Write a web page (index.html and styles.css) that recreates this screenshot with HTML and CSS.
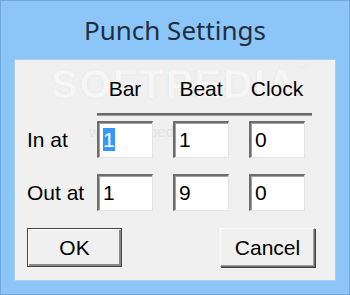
FILE: index.html
```html
<!DOCTYPE html>
<html lang="en">
<head>
  <meta charset="UTF-8" />
  <title>Punch Settings</title>
  <link rel="stylesheet" href="styles.css">
</head>
<body>

  <div class="window">
    <h1 class="caption">Punch Settings</h1>
    <div class="panel">
      <div class="watermark">SOFTPEDIA<sup>™</sup></div>
      <div class="watermark-url">www.softpedia.com</div>

      <div class="grid">
        <span></span>
        <span class="col-head">Bar</span>
        <span class="col-head">Beat</span>
        <span class="col-head">Clock</span>

        <span></span>
        <div class="rule"></div>

        <label class="row-label">In at</label>
        <div class="field"><span class="selected">1</span></div>
        <div class="field">1</div>
        <div class="field">0</div>

        <label class="row-label row-out">Out at</label>
        <div class="field row-out">1</div>
        <div class="field row-out">9</div>
        <div class="field row-out">0</div>
      </div>

      <div class="buttons">
        <button class="btn default">OK</button>
        <button class="btn">Cancel</button>
      </div>
    </div>
  </div>

</body>
</html>
```

FILE: styles.css
```css
* {
  margin: 0;
  padding: 0;
  box-sizing: border-box;
}

body {
  width: 350px;
  height: 295px;
  overflow: hidden;
  font-family: "Liberation Sans", Arial, sans-serif;
}

.window {
  width: 350px;
  height: 295px;
  background: #8cc6f8;
  border: 1px solid #6fa7d9;
  padding: 0 13px;
}

.caption {
  height: 58px;
  padding-top: 11px;
  text-align: center;
  font-family: "Noto Sans", sans-serif;
  font-weight: normal;
  font-size: 26px;
  color: #1f2e42;
}

.panel {
  position: relative;
  height: 222px;
  background: #f0f0f0;
  border: 1px solid #a9cdec;
  padding: 0 0 0 12px;
}

.watermark {
  position: absolute;
  left: 36px;
  top: 2px;
  font-size: 40px;
  font-weight: bold;
  letter-spacing: 2px;
  color: #f6f6f6;
  text-shadow: 0 0 1px #d4d4d4;
}

.watermark sup {
  font-size: 10px;
  vertical-align: top;
}

.watermark-url {
  position: absolute;
  left: 74px;
  top: 63px;
  font-size: 15px;
  color: #e2e2e2;
}

.grid {
  position: relative;
  display: grid;
  grid-template-columns: 50px 56px 56px 56px;
  grid-template-rows: 33px 20px 37px 53px;
  column-gap: 20px;
  padding-top: 8px;
  font-size: 21px;
  color: #000;
}

.col-head {
  text-align: center;
  align-self: end;
  line-height: 24px;
}

.rule {
  grid-column: 2 / 5;
  height: 3px;
  margin: 12px -7px 0 0;
  border-top: 2px solid #6a6a6a;
  border-bottom: 1px solid #9a9a9a;
  align-self: start;
}

.row-label {
  align-self: center;
  white-space: nowrap;
}

.row-out {
  margin-top: 16px;
}

.field {
  background: #fff;
  border-top: 2px solid #6d6d6d;
  border-left: 2px solid #6d6d6d;
  border-right: 1px solid #e3e3e3;
  border-bottom: 1px solid #e3e3e3;
  box-shadow: inset 1px 1px 0 #a0a0a0;
  padding: 5px 0 0 4px;
  line-height: 24px;
}

.selected {
  background: #3399ff;
  color: #fff;
}

.buttons {
  display: flex;
  justify-content: space-between;
  margin-top: 17px;
  padding-right: 20px;
}

.btn {
  width: 95px;
  height: 39px;
  font-family: "Liberation Sans", Arial, sans-serif;
  font-size: 21px;
  color: #000;
  background: #f0f0f0;
  border: 1px solid #fff;
  border-right-color: #6a6a6a;
  border-bottom-color: #6a6a6a;
  box-shadow: inset -1px -1px 0 #a0a0a0, 1px 1px 0 #444;
}

.btn.default {
  border: 1px solid #444;
  box-shadow: inset 1px 1px 0 #fff, inset -2px -2px 0 #8a8a8a;
}
```
